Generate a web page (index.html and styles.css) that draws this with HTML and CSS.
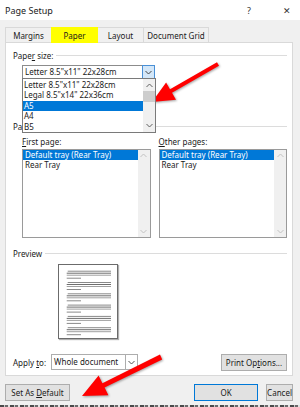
FILE: index.html
```html
<!DOCTYPE html>
<html lang="en">
<head>
    <meta charset="UTF-8">
    <title>Page Setup</title>
    <link rel="stylesheet" href="styles.css">
</head>
<body>

    <div class="dialog">
        <div class="titlebar">
            <span class="title">Page Setup</span>
            <span class="help">?</span>
            <span class="close">&#x2715;</span>
        </div>

        <!-- Tabs -->
        <div class="tabs">
            <div class="tab tab-margins">Margins</div>
            <div class="tab tab-paper active">Paper</div>
            <div class="tab tab-layout">Layout</div>
            <div class="tab tab-grid">Document Grid</div>
        </div>

        <div class="panel">
            <div class="group-head"><span>Pape<u>r</u> size:</span></div>

            <div class="combo size-combo">
                <span class="combo-text">Letter 8.5"x11" 22x28cm</span>
                <span class="combo-btn open">
                    <svg width="7" height="5" viewBox="0 0 7 5"><path d="M0.5 1 L3.5 4 L6.5 1" fill="none" stroke="#444" stroke-width="1"/></svg>
                </span>

                <!-- open dropdown list -->
                <div class="droplist">
                    <ul class="drop-items">
                        <li>Letter 8.5"x11" 22x28cm</li>
                        <li>Legal 8.5"x14" 22x36cm</li>
                        <li class="selected">A5</li>
                        <li>A4</li>
                        <li>B5</li>
                    </ul>
                    <div class="scrollbar">
                        <svg width="7" height="5" viewBox="0 0 7 5"><path d="M0.5 4 L3.5 1 L6.5 4" fill="none" stroke="#606060"/></svg>
                        <div class="thumb-bar"></div>
                        <svg class="down" width="7" height="5" viewBox="0 0 7 5"><path d="M0.5 1 L3.5 4 L6.5 1" fill="none" stroke="#606060"/></svg>
                    </div>
                </div>
            </div>

            <div class="group-head source-head"><span>Paper source</span></div>

            <div class="trays">
                <div class="tray">
                    <div class="tray-label"><u>F</u>irst page:</div>
                    <div class="listbox">
                        <ul class="list-items">
                            <li class="selected">Default tray (Rear Tray)</li>
                            <li>Rear Tray</li>
                        </ul>
                        <div class="scrollbar disabled">
                            <svg width="7" height="5" viewBox="0 0 7 5"><path d="M0.5 4 L3.5 1 L6.5 4" fill="none" stroke="#c2c2c2"/></svg>
                            <svg width="7" height="5" viewBox="0 0 7 5"><path d="M0.5 1 L3.5 4 L6.5 1" fill="none" stroke="#c2c2c2"/></svg>
                        </div>
                    </div>
                </div>
                <div class="tray">
                    <div class="tray-label"><u>O</u>ther pages:</div>
                    <div class="listbox">
                        <ul class="list-items">
                            <li class="selected">Default tray (Rear Tray)</li>
                            <li>Rear Tray</li>
                        </ul>
                        <div class="scrollbar disabled">
                            <svg width="7" height="5" viewBox="0 0 7 5"><path d="M0.5 4 L3.5 1 L6.5 4" fill="none" stroke="#c2c2c2"/></svg>
                            <svg width="7" height="5" viewBox="0 0 7 5"><path d="M0.5 1 L3.5 4 L6.5 1" fill="none" stroke="#c2c2c2"/></svg>
                        </div>
                    </div>
                </div>
            </div>

            <div class="group-head preview-head"><span>Preview</span></div>

            <div class="page-thumb">
                <svg width="58" height="73" viewBox="0 0 58 73" id="pageLines"></svg>
            </div>

            <div class="apply-row">
                <span class="apply-label">Apply <u>t</u>o:</span>
                <div class="combo apply-combo">
                    <span class="combo-text">Whole document</span>
                    <span class="combo-btn">
                        <svg width="7" height="5" viewBox="0 0 7 5"><path d="M0.5 1 L3.5 4 L6.5 1" fill="none" stroke="#555" stroke-width="1"/></svg>
                    </span>
                </div>
                <button class="btn print-btn">Print Op<u>t</u>ions...</button>
            </div>
        </div>

        <!-- Buttons -->
        <div class="footer">
            <button class="btn default-btn">Set As <u>D</u>efault</button>
            <div class="footer-right">
                <button class="btn ok-btn">OK</button>
                <button class="btn cancel-btn">Cancel</button>
            </div>
        </div>
        <div class="cutoff"></div>
    </div>

    <!-- annotations drawn over the dialog -->
    <svg class="overlay" width="300" height="407" viewBox="0 0 300 407">
        <g class="arrow">
            <polygon points="217,62.3 219,65.7 172,92.8 176,99.7 152,102 166.1,82.4 170,89.3"/>
            <polygon points="160,354.6 162.2,359.4 104.6,387.6 108.4,395.3 82,396 98.6,375.5 102.4,383.2"/>
        </g>
        <path class="cursor" d="M129.5 106 L129.5 117 L132 114.6 L133.8 118.3 L135.4 117.6 L133.7 114 L137 114 Z"/>
    </svg>

    <script>
        // preview page: six paragraphs of text lines
        const svgNS = 'http://www.w3.org/2000/svg';
        const pageLines = document.getElementById('pageLines');
        for (let p = 0; p < 6; p++) {
            const top = 5.7 + p * 11.3;
            const rows = [
                [8.7, 52, top, '#8a8a8a'],
                [7.7, 52, top + 2, '#6e6e6e'],
                [7.7, 52, top + 4, '#a0a0a0'],
                [7.7, 22, top + 7, '#8a8a8a']
            ];
            rows.forEach(r => {
                const line = document.createElementNS(svgNS, 'rect');
                line.setAttribute('x', r[0]);
                line.setAttribute('y', r[2]);
                line.setAttribute('width', r[1] - r[0]);
                line.setAttribute('height', 1);
                line.setAttribute('fill', r[3]);
                pageLines.appendChild(line);
            });
        }
    </script>

</body>
</html>
```

FILE: styles.css
```css
body {
    margin: 0;
    padding: 0;
    font-family: "Noto Sans", "Open Sans", sans-serif;
    font-size: 8px;
    color: #1a1a1a;
    background-color: #f0f0f0;
}
ul {
    list-style: none;
    margin: 0;
    padding: 0;
}
.dialog {
    width: 300px;
    height: 407px;
    overflow: hidden;
}
.titlebar {
    height: 20px;
    background-color: #fff;
    display: flex;
    align-items: center;
    padding-left: 5px;
}
.title {
    font-size: 9px;
    flex: 1;
    padding-top: 1px;
}
.help {
    font-size: 9px;
    color: #333;
    width: 36px;
}
.close {
    font-size: 9px;
    color: #333;
    width: 17px;
}
.tabs {
    display: flex;
    margin-top: 7px;
    padding-left: 5px;
    height: 15px;
}
.tab {
    height: 15px;
    box-sizing: border-box;
    border: 1px solid #d9d9d9;
    border-bottom: none;
    background-color: #f0f0f0;
    display: flex;
    align-items: center;
    justify-content: center;
    margin-right: -1px;
}
.tab-margins { width: 47px; }
.tab-paper { width: 47px; }
.tab-layout { width: 47px; }
.tab-grid { width: 66px; }
.tab.active {
    background-color: #ffff00;
    border-color: #ffff00;
    height: 16px;
    position: relative;
    z-index: 1;
}
.panel {
    height: 334px;
    box-sizing: border-box;
    margin: 0 7px 0 5px;
    border: 1px solid #d9d9d9;
    background-color: #fff;
    padding: 6px 5px 0 7px;
}
.group-head {
    display: flex;
    align-items: center;
    height: 12px;
}
.group-head::after {
    content: "";
    flex: 1;
    border-top: 1px solid #dcdcdc;
    margin-left: 3px;
}
.combo {
    display: flex;
    box-sizing: border-box;
    border: 1px solid #7a7a7a;
    background-color: #fff;
    position: relative;
}
.size-combo {
    margin: 4px 0 0 9px;
    width: 133px;
    height: 14px;
    border-color: #8c8c8c;
}
.combo-text {
    flex: 1;
    padding-left: 2px;
    line-height: 12px;
}
.combo-btn {
    width: 11px;
    display: flex;
    align-items: center;
    justify-content: center;
    border-left: 1px solid #adadad;
}
.combo-btn.open {
    background-color: #d4e7f8;
    border: 1px solid #4a90d6;
    margin: -1px -1px -1px 0;
    width: 11px;
}
.droplist {
    position: absolute;
    top: 100%;
    left: -1px;
    width: 134px;
    height: 55px;
    box-sizing: border-box;
    border: 1px solid #7a7a7a;
    background-color: #fff;
    display: flex;
    z-index: 2;
}
.drop-items {
    flex: 1;
    padding-top: 1px;
}
.drop-items li {
    height: 10.4px;
    line-height: 10.4px;
    padding-left: 1px;
}
.selected {
    background-color: #0078d7;
    color: #fff;
}
.scrollbar {
    width: 12px;
    background-color: #f0f0f0;
    display: flex;
    flex-direction: column;
    align-items: center;
    justify-content: space-between;
    padding: 4px 0;
    box-sizing: border-box;
}
.thumb-bar {
    width: 12px;
    height: 11px;
    background-color: #cdcdcd;
    margin-top: -2px;
    margin-bottom: 16px;
}
.source-head {
    margin-top: 41px;
}
.trays {
    display: flex;
    gap: 8px;
    margin-top: 4px;
    padding-left: 9px;
}
.tray {
    width: 129px;
}
.tray-label {
    height: 12px;
    line-height: 12px;
}
.listbox {
    margin-top: 1px;
    height: 89px;
    box-sizing: border-box;
    border: 1px solid #9a9a9a;
    display: flex;
}
.list-items {
    flex: 1;
}
.list-items li {
    height: 10px;
    line-height: 10px;
    padding-left: 2px;
}
.scrollbar.disabled {
    padding: 3px 0;
}
.preview-head {
    margin-top: 9px;
}
.page-thumb {
    margin: 5px 0 0 45px;
    width: 60px;
    height: 75px;
    box-sizing: border-box;
    border: 1px solid #6b6b6b;
    box-shadow: 1px 1px 1px #b0b0b0;
    background-color: #fff;
}
.page-thumb svg {
    display: block;
}
.apply-row {
    display: flex;
    align-items: center;
    margin-top: 15px;
    height: 16px;
}
.apply-label {
    width: 38px;
}
.apply-combo {
    width: 87px;
    height: 16px;
    border-color: #adadad;
}
.apply-combo .combo-text {
    line-height: 14px;
}
.btn {
    font-family: inherit;
    font-size: 8px;
    color: #1a1a1a;
    background-color: #e1e1e1;
    border: 1px solid #adadad;
    padding: 0;
    height: 17px;
}
.print-btn {
    margin-left: auto;
    width: 66px;
    height: 17px;
}
.footer {
    display: flex;
    margin-top: 8px;
    padding: 0 7px 0 5px;
}
.default-btn {
    width: 65px;
}
.footer-right {
    margin-left: auto;
    display: flex;
    gap: 8px;
}
.ok-btn {
    width: 64px;
    border-color: #0078d7;
}
.cutoff {
    margin-top: 4px;
    height: 3px;
    background: repeating-linear-gradient(90deg, #4a4a4a 0 4px, #c8c8c8 4px 5px, #6a6a6a 5px 8px, #e0e0e0 8px 10px);
}
.overlay {
    position: absolute;
    top: 0;
    left: 0;
    pointer-events: none;
}
.arrow {
    fill: #ff0000;
    filter: drop-shadow(1px 1px 1px rgba(0, 0, 0, 0.35));
}
.cursor {
    fill: #fff;
    stroke: #000;
    stroke-width: 0.8;
}
```
